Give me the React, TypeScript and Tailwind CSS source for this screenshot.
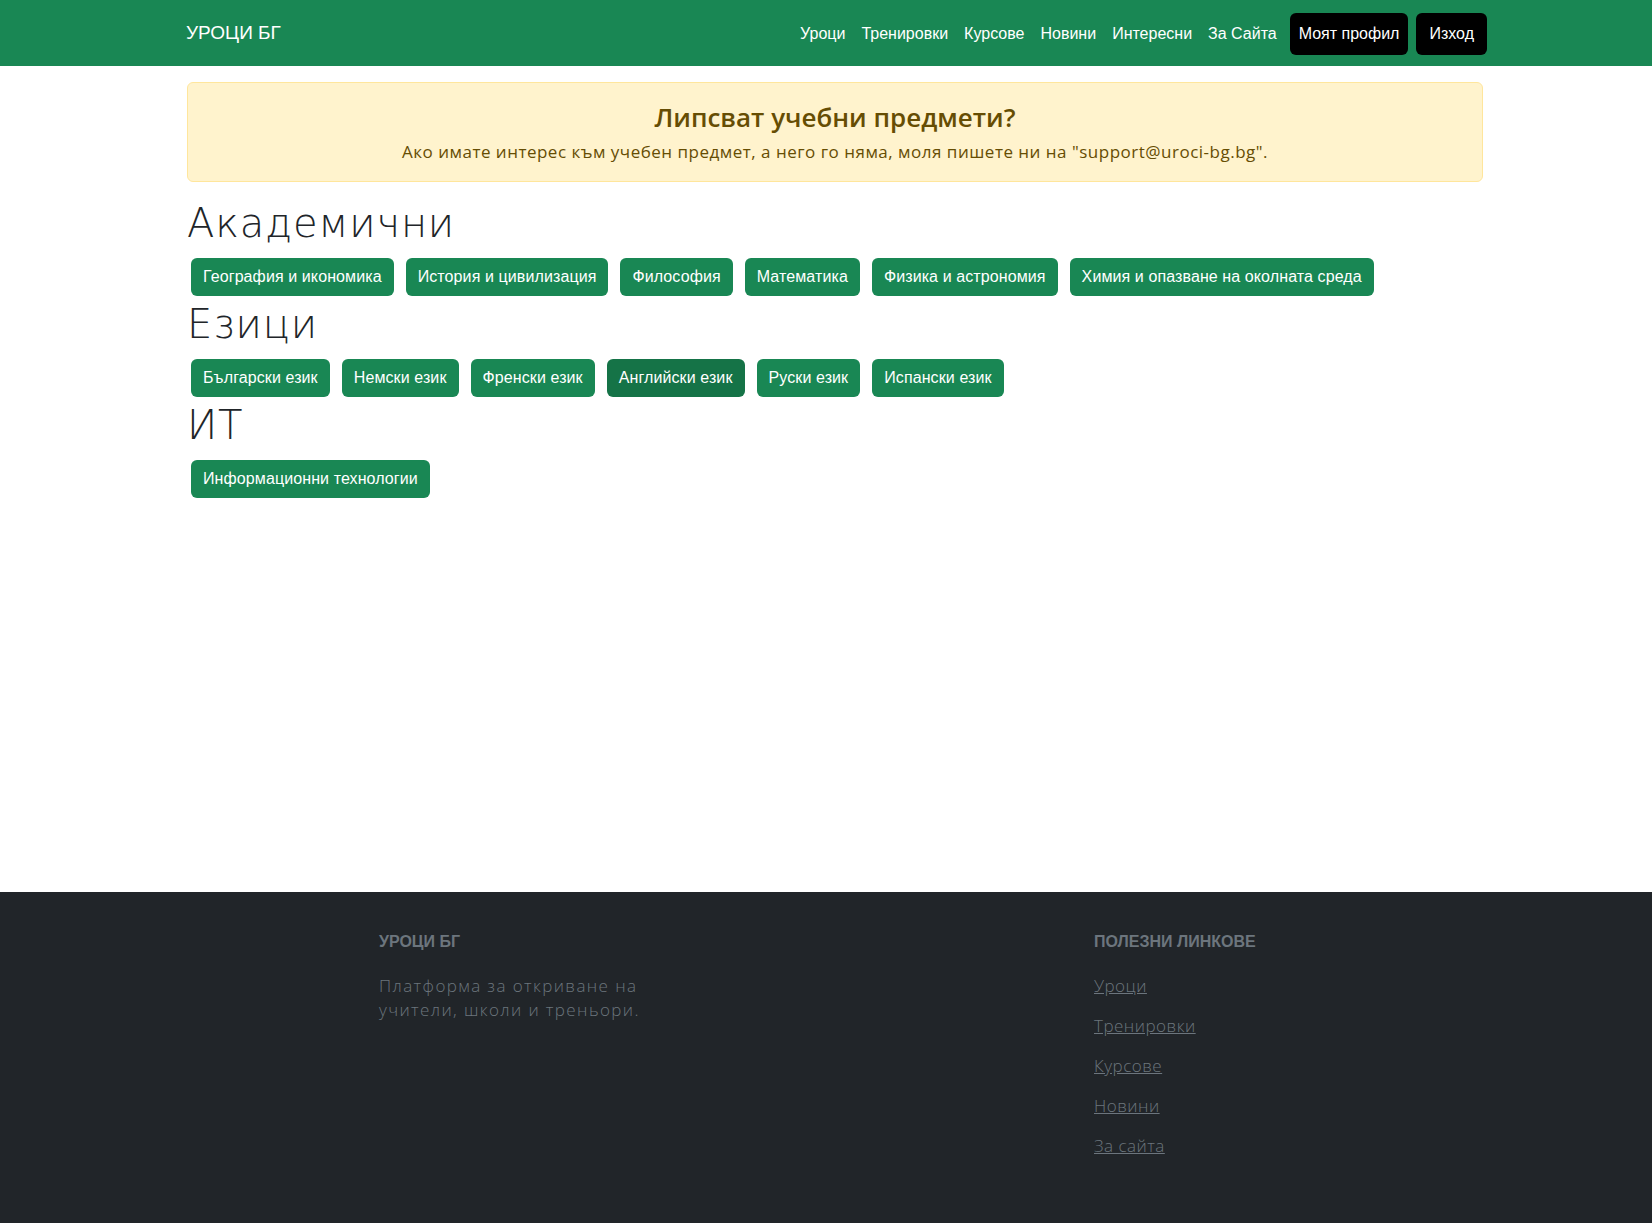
import React from "react";

const navLinks = ["Уроци", "Тренировки", "Курсове", "Новини", "Интересни", "За Сайта"];

const sections: { title: string; items: string[] }[] = [
  {
    title: "Академични",
    items: [
      "География и икономика",
      "История и цивилизация",
      "Философия",
      "Математика",
      "Физика и астрономия",
      "Химия и опазване на околната среда",
    ],
  },
  {
    title: "Езици",
    items: ["Български език", "Немски език", "Френски език", "Английски език", "Руски език", "Испански език"],
  },
  { title: "ИТ", items: ["Информационни технологии"] },
];

const footerLinks = ["Уроци", "Тренировки", "Курсове", "Новини", "За сайта"];

export default function App() {
  return (
    <div className="min-h-screen flex flex-col bg-white" style={{ fontFamily: '"Liberation Sans", Arial, sans-serif' }}>
      <nav className="bg-[#198754] h-[66px] flex items-center">
        <div className="ml-[186px] w-[1301px] flex items-center justify-between">
          <span className="text-white text-[19px] leading-[30px]">УРОЦИ БГ</span>
          <div className="flex items-center pt-[2px]">
            {navLinks.map((l) => (
              <a key={l} className="text-white text-[16px] leading-[24px] px-[8px]">
                {l}
              </a>
            ))}
            <button className="ml-[5px] h-[42px] px-[9px] bg-black text-white rounded-[6px] text-[16px]">Моят профил</button>
            <button className="ml-[8px] h-[42px] px-[13px] bg-black text-white rounded-[6px] text-[16px]">Изход</button>
          </div>
        </div>
      </nav>

      <main className="flex-1">
        <div className="ml-[187px] w-[1296px]">
          <div className="mt-[16px] h-[100px] bg-[#fff3cd] border border-[#ffe69c] rounded-[6px] flex flex-col items-center text-[#664d03]">
            <h3
              className="mt-[17px] text-[26px] leading-[34px] font-semibold"
              style={{ fontFamily: '"Open Sans", sans-serif' }}
            >
              Липсват учебни предмети?
            </h3>
            <p
              className="mt-[6px] text-[17px] leading-[24px] font-medium tracking-[0.5px]"
              style={{ fontFamily: '"Open Sans", sans-serif' }}
            >
              Ако имате интерес към учебен предмет, а него го няма, моля пишете ни на "support@uroci-bg.bg".
            </p>
          </div>

          <div className="mt-[17px]">
            {sections.map((s, i) => (
              <section key={s.title} className={i === 0 ? "" : "mt-[4px]"}>
                <h2
                  className="text-[40px] leading-[48px] font-extralight text-[#212529] tracking-[0.8px]"
                  style={{ fontFamily: '"DejaVu Sans", sans-serif' }}
                >
                  {s.title}
                </h2>
                <div className="mt-[11px] pl-[4px] flex flex-wrap gap-[12px]">
                  {s.items.map((it) => (
                    <button
                      key={it}
                      className={`h-[38px] px-[12px] rounded-[6px] text-white text-[16px] leading-[24px] tracking-[0.1px] ${
                        it === "Английски език" ? "bg-[#157347]" : "bg-[#198754]"
                      }`}
                    >
                      {it}
                    </button>
                  ))}
                </div>
              </section>
            ))}
          </div>
        </div>
      </main>

      <footer className="bg-[#212529] h-[331px] pt-[40px]">
        <div className="ml-[187px] w-[1296px] grid grid-cols-[715px_1fr] pl-[192px]">
          <div>
            <h6 className="text-[#6c757d] text-[16px] leading-[20px] font-bold uppercase">Уроци БГ</h6>
            <p
              className="mt-[22px] w-[280px] text-[#6c757d] text-[17px] leading-[24px] font-light tracking-[1.4px]"
              style={{ fontFamily: '"Open Sans", sans-serif' }}
            >
              Платформа за откриване на учители, школи и треньори.
            </p>
          </div>
          <div>
            <h6 className="text-[#6c757d] text-[16px] leading-[20px] font-bold uppercase">Полезни линкове</h6>
            <ul className="mt-[22px] flex flex-col gap-[16px]" style={{ fontFamily: '"Open Sans", sans-serif' }}>
              {footerLinks.map((l) => (
                <li key={l}>
                  <a className="text-[#6c757d] text-[17px] leading-[24px] font-light underline tracking-[0.5px]">{l}</a>
                </li>
              ))}
            </ul>
          </div>
        </div>
      </footer>
    </div>
  );
}
